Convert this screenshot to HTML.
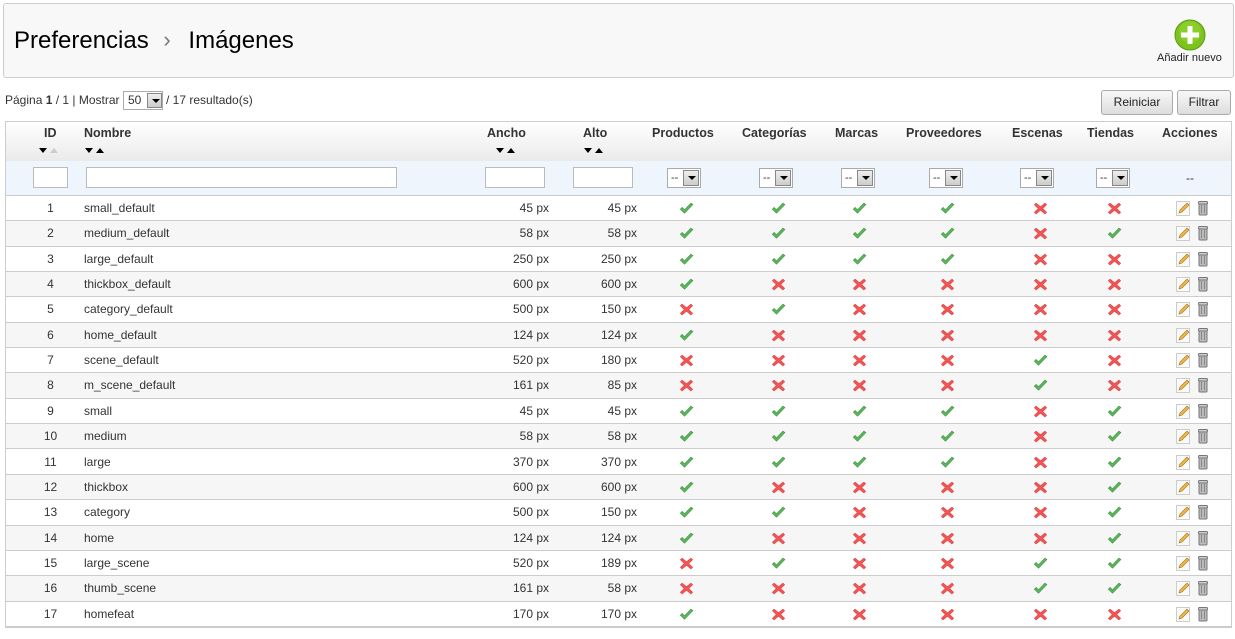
<!DOCTYPE html>
<html><head><meta charset="utf-8"><style>
*{box-sizing:border-box;margin:0;padding:0}
body{width:1235px;height:639px;background:#fff;font-family:"Liberation Sans",Arial,sans-serif;font-size:12px;color:#333;position:relative;overflow:hidden}
.abs{position:absolute}
.panel{left:3px;top:3px;width:1231px;height:75px;background:#f8f8f8;border:1px solid #ccc;border-radius:3px}
.title{left:14px;top:27px;font-size:24px;color:#000}
.btn{top:90px;height:25px;border:1px solid #aaa;border-radius:3px;background:linear-gradient(#f8f8f8,#ddd);font-size:12px;color:#222;text-align:center;line-height:23px}
.tbl{left:5px;top:121px;width:1227px;height:507px;border:1px solid #ccc;border-bottom:2px solid #ccc}
.hdr{left:0;top:0;width:1225px;height:39px;background:linear-gradient(#fff,#eaeaea)}
.flt{left:0;top:39px;width:1225px;height:35px;background:#eef5fc;border-bottom:1px solid #ccc}
.h{position:absolute;top:4px;font-weight:bold;font-size:12.5px;color:#333}
.ar{position:absolute;top:26px;height:6px;width:22px}
.ar:before,.ar:after{content:"";position:absolute;top:0;border-left:4.5px solid transparent;border-right:4.5px solid transparent}
.ar:before{left:0;border-top:5px solid #000}
.ar:after{left:11px;border-bottom:5px solid #000}
.ar.g:after{border-bottom-color:#ccc}
.inp{position:absolute;top:6px;height:21px;background:#fff;border:1px solid #bbb}
.sel{position:absolute;top:7px;width:34px;height:20px;background:#fff;border:1px solid #aaa;font-size:11px;line-height:18px;padding-left:3px}
.sel i{position:absolute;right:1px;top:1px;width:16px;height:16px;background:linear-gradient(#eee,#ccc);border:1px solid #888}
.sel i:after{content:"";position:absolute;left:3.5px;top:5px;border:4px solid transparent;border-top:4px solid #000}
.row{position:absolute;left:0;width:1225px;height:25.35px;border-bottom:1px solid #ccc;font-size:12px;line-height:24px}
.row.alt{background:#f6f6f6}
.c{position:absolute;top:0}
svg.ic{position:absolute;top:6px;width:15px;height:13px}
</style></head><body>
<svg width="0" height="0" style="position:absolute">
<defs>
<symbol id="ok" viewBox="0 0 14 13"><path d="M0.8 7.2 L5 11.2 L13.4 2.6 L11.4 1.2 L5 7.8 L2.6 5.4 Z" fill="#5cb85c" stroke="#3a8f3a" stroke-width=".6"/></symbol>
<symbol id="no" viewBox="0 0 14 13"><path d="M2.5 1 L7 4.6 L11.5 1 L13.3 2.8 L9.3 6.5 L13.3 10.3 L11.5 12.1 L7 8.4 L2.5 12.1 L0.7 10.3 L4.7 6.5 L0.7 2.8 Z" fill="#f25555" stroke="#d03535" stroke-width=".5"/></symbol>
<symbol id="ed" viewBox="0 0 14 15"><rect x=".5" y=".5" width="13" height="14" fill="#fafafa" stroke="#ccc"/><path d="M3 12 L4 9 L11 2 L13 4 L6 11 Z" fill="#f0b840" stroke="#a07020" stroke-width=".6"/></symbol>
<symbol id="tr" viewBox="0 0 10 15"><rect x="1" y="2" width="8" height="12" rx="1" fill="#bbb" stroke="#777"/><rect x=".5" y=".5" width="9" height="2.5" rx="1" fill="#ccc" stroke="#777"/><path d="M3.5 4v8M6.5 4v8" stroke="#888"/></symbol>
</defs></svg>

<div class="abs panel"></div>
<div class="abs title">Preferencias <span style="color:#777;font-size:22px;margin:0 11px 0 8px;position:relative;top:-1px">&#8250;</span> Imágenes</div>
<svg class="abs" style="left:1174px;top:19px" width="32" height="32" viewBox="0 0 32 32"><circle cx="16" cy="16" r="15" fill="#7cc31d" stroke="#5a9a10"/><circle cx="16" cy="13" r="11" fill="#9ad83a" opacity=".5"/><path d="M13.5 7h5v6.5H25v5h-6.5V25h-5v-6.5H7v-5h6.5z" fill="#fff"/></svg>
<div class="abs" style="left:1157px;top:52px;font-size:11px;color:#222">Añadir nuevo</div>

<div class="abs" style="left:5px;top:93px">Página <b>1</b> / 1 | Mostrar</div>
<div class="abs" style="left:123px;top:91px;width:40px;height:19px;border:1px solid #aaa;background:#fff;padding-left:4px;line-height:17px">50<span class="sel" style="border:none;top:0;left:21px;width:18px;height:17px;background:none"><i style="width:15px;height:15px"></i></span></div>
<div class="abs" style="left:166px;top:93px">/ 17 resultado(s)</div>
<div class="abs btn" style="left:1101px;width:72px">Reiniciar</div>
<div class="abs btn" style="left:1177px;width:54px">Filtrar</div>

<div class="abs tbl">
<div class="abs hdr">
<span class="h" style="left:38px">ID</span><span class="ar g" style="left:33px"></span>
<span class="h" style="left:78px">Nombre</span><span class="ar" style="left:79px"></span>
<span class="h" style="left:481px">Ancho</span><span class="ar" style="left:490px"></span>
<span class="h" style="left:577px">Alto</span><span class="ar" style="left:578px"></span>
<span class="h" style="left:646px">Productos</span>
<span class="h" style="left:736px">Categorías</span>
<span class="h" style="left:829px">Marcas</span>
<span class="h" style="left:900px">Proveedores</span>
<span class="h" style="left:1006px">Escenas</span>
<span class="h" style="left:1081px">Tiendas</span>
<span class="h" style="left:1156px">Acciones</span>
</div>
<div class="abs flt">
<div class="inp" style="left:27px;width:35px"></div>
<div class="inp" style="left:80px;width:311px"></div>
<div class="inp" style="left:479px;width:60px"></div>
<div class="inp" style="left:567px;width:60px"></div>
<div class="sel" style="left:661px">--<i></i></div>
<div class="sel" style="left:753px">--<i></i></div>
<div class="sel" style="left:835px">--<i></i></div>
<div class="sel" style="left:923px">--<i></i></div>
<div class="sel" style="left:1014px">--<i></i></div>
<div class="sel" style="left:1090px">--<i></i></div>
<div class="abs" style="left:1180px;top:10px">--</div>
</div>
<div id="rows"></div>
</div>
<script>
var d=[["small_default",45,45,"111100"],["medium_default",58,58,"111101"],["large_default",250,250,"111100"],["thickbox_default",600,600,"100000"],["category_default",500,150,"010000"],["home_default",124,124,"100000"],["scene_default",520,180,"000010"],["m_scene_default",161,85,"000010"],["small",45,45,"111101"],["medium",58,58,"111101"],["large",370,370,"111101"],["thickbox",600,600,"100001"],["category",500,150,"110001"],["home",124,124,"100001"],["large_scene",520,189,"010011"],["thumb_scene",161,58,"000011"],["homefeat",170,170,"100000"]];
var cx=[673,765,846,934,1027,1101],h="";
d.forEach(function(r,i){
 var s='<div class="row'+(i%2?' alt':'')+'" style="top:'+(74+i*25.35)+'px">';
 s+='<span class="c" style="left:0;text-align:center;width:89px">'+(i+1)+'</span>';
 s+='<span class="c" style="left:78px">'+r[0]+'</span>';
 s+='<span class="c" style="left:460px;width:83px;text-align:right">'+r[1]+' px</span>';
 s+='<span class="c" style="left:548px;width:83px;text-align:right">'+r[2]+' px</span>';
 for(var k=0;k<6;k++) s+='<svg class="ic" style="left:'+cx[k]+'px"><use href="#'+(r[3][k]=="1"?"ok":"no")+'"/></svg>';
 s+='<svg style="position:absolute;left:1170px;top:5px" width="14" height="15"><use href="#ed"/></svg>';
 s+='<svg style="position:absolute;left:1192px;top:5px" width="10" height="15"><use href="#tr"/></svg>';
 h+=s+'</div>';
});
document.getElementById('rows').innerHTML=h;
</script>
</body></html>
